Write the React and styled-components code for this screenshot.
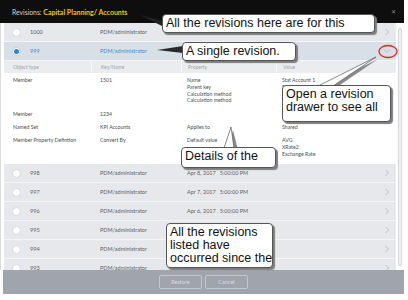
import styled, { createGlobalStyle } from 'styled-components'

const GlobalStyle = createGlobalStyle`
  html, body {
    margin: 0;
    padding: 0;
    background: #fff;
  }
  body {
    font-family: Lato, "Liberation Sans", sans-serif;
  }
`

const topRows = [
  { id: '1000', date: 'Apr 10, 2017' },
  { id: '999', date: 'Apr 9, 2017', selected: true },
]

const bottomRows = [
  { id: '998', date: 'Apr 8, 2017' },
  { id: '997', date: 'Apr 7, 2017' },
  { id: '996', date: 'Apr 6, 2017' },
  { id: '995', date: 'Apr 5, 2017' },
  { id: '994', date: 'Apr 4, 2017' },
  { id: '993', date: 'Apr 3, 2017' },
]

const details = [
  {
    type: 'Member',
    key: '1501',
    props: ['Name', 'Parent key', 'Calculation method', 'Calculation method'],
    values: ['Stat Account 1', 'Stat Accounts', '', 'AVG'],
  },
  { type: 'Member', key: '1234', props: [], values: ['Custom'] },
  { type: 'Named Set', key: 'KPI Accounts', props: ['Applies to'], values: ['Shared'] },
  {
    type: 'Member Property Defintion',
    key: 'Convert By',
    props: ['Default value'],
    values: ['AVG', 'XRate2', 'Exchange Rate'],
  },
]

const Chevron = ({ down }) => (
  <svg width="8" height="8" viewBox="0 0 8 8">
    {down ? (
      <path d="M1 2.5 L4 5.5 L7 2.5" fill="none" stroke="#a9aeb5" strokeWidth="0.8" />
    ) : (
      <path d="M2.5 1 L5.5 4 L2.5 7" fill="none" stroke="#b3b7bd" strokeWidth="0.8" />
    )}
  </svg>
)

const RevisionRow = ({ row }) => (
  <Row $selected={row.selected}>
    <Radio $selected={row.selected} />
    <Cell>{row.id}</Cell>
    <Cell>PDM/administrator</Cell>
    <Cell>
      {row.date}
      <Time>5:00:00 PM</Time>
    </Cell>
    <Arrow>
      <Chevron down={row.selected} />
    </Arrow>
  </Row>
)

const App = () => {
  return (
    <>
      <GlobalStyle />
      <Frame>
        <Header>
          <Title>
            Revisions: <strong>Capital Planning/ Accounts</strong>
          </Title>
          <Close>✕</Close>
        </Header>

        <Content>
          <List>
            {topRows.map((row) => (
              <RevisionRow key={row.id} row={row} />
            ))}

            <DetailHead>
              <HeadCell $pad={9}>Object type</HeadCell>
              <HeadCell $pad={9}>Key/Name</HeadCell>
              <HeadCell $pad={6}>Property</HeadCell>
              <HeadCell $pad={6}>Value</HeadCell>
            </DetailHead>

            <DetailBody>
              {details.map((d, i) => (
                <DetailRow key={i}>
                  <DetailCell $pad={9}>{d.type}</DetailCell>
                  <DetailCell $pad={9}>{d.key}</DetailCell>
                  <DetailCell $pad={6}>
                    {d.props.map((p, j) => (
                      <div key={j}>{p}</div>
                    ))}
                  </DetailCell>
                  <DetailCell $pad={6}>
                    {d.values.map((v, j) => (
                      <div key={j}>{v || '\u00a0'}</div>
                    ))}
                  </DetailCell>
                </DetailRow>
              ))}
            </DetailBody>

            {bottomRows.map((row) => (
              <RevisionRow key={row.id} row={row} />
            ))}
          </List>
          <Scrollbar>
            <Thumb />
          </Scrollbar>
        </Content>

        <Footer>
          <FooterButton>Restore</FooterButton>
          <FooterButton>Cancel</FooterButton>
        </Footer>

        {/* annotation layer */}
        <Pointers width="408" height="300" viewBox="0 0 408 300">
          <polygon points="140,15 164,21 164,27" fill="#222" />
          <polygon points="157,50 183,46 183,53" fill="#2a2a2a" />
          <ellipse cx="388" cy="51.5" rx="9" ry="6" fill="none" stroke="#e0241c" strokeWidth="1.3" />
          <polygon points="378,59 322,87 337,87" fill="#8a8a8a" />
          <polygon points="376,57 318,86 333,86" fill="#fff" stroke="#555" strokeWidth="0.7" />
          <polygon points="233,130 228,150 238,150" fill="#8a8a8a" />
          <polygon points="231,127 224,148 234,148" fill="#fff" stroke="#555" strokeWidth="0.7" />
        </Pointers>

        <Callout $x={162} $y={14} $w={213} $h={19}>
          All the revisions here are for this
        </Callout>
        <Callout $x={182} $y={42} $w={114} $h={19}>
          A single revision.
        </Callout>
        <Callout $x={282} $y={85} $w={109} $h={37}>
          Open a revision
          <br />
          drawer to see all
        </Callout>
        <Callout $x={181} $y={147} $w={95} $h={21}>
          Details of the
        </Callout>
        <Callout $x={166} $y={223} $w={107} $h={45}>
          All the revisions
          <br />
          listed have
          <br />
          occurred since the
        </Callout>
      </Frame>
    </>
  )
}

export default App

const Frame = styled.div`
  position: relative;
  width: 408px;
  height: 300px;
  overflow: hidden;
  background: #fff;
  display: flex;
  flex-direction: column;
`

const Header = styled.div`
  width: 404px;
  height: 23px;
  flex-shrink: 0;
  box-sizing: border-box;
  background: #0e0e0e;
  padding: 0 8px 0 12px;
  display: flex;
  align-items: center;
  justify-content: space-between;
`

const Title = styled.div`
  color: #d6d6d6;
  font-size: 6.8px;

  strong {
    color: #f2c200;
    font-weight: 700;
    font-size: 7px;
  }
`

const Close = styled.div`
  color: #8c8c8c;
  font-size: 6px;
  font-family: "DejaVu Sans", sans-serif;
`

const Content = styled.div`
  width: 404px;
  height: 247px;
  flex-shrink: 0;
  box-sizing: border-box;
  padding-left: 3px;
  border-left: 1px solid #dcdcdc;
  display: flex;
`

const List = styled.div`
  flex: 1;
  overflow: hidden;
`

const Row = styled.div`
  height: 19px;
  box-sizing: border-box;
  border-bottom: 1px solid #f3f4f6;
  background: ${(p) => (p.$selected ? '#d9dfe7' : '#e6e8eb')};
  color: ${(p) => (p.$selected ? '#3f8cc6' : '#5c5f63')};
  padding: 0 4px 0 8px;
  display: grid;
  grid-template-columns: 18px 70px 87px 1fr 10px;
  align-items: center;
  font-size: 5.5px;
`

const Radio = styled.div`
  position: relative;
  width: 9px;
  height: 9px;
  box-sizing: border-box;
  border-radius: 50%;
  border: 1px solid ${(p) => (p.$selected ? '#b9cde0' : '#d6d9dd')};
  background: #fff;

  &::after {
    content: '';
    display: ${(p) => (p.$selected ? 'block' : 'none')};
    position: absolute;
    left: 1px;
    top: 1px;
    width: 5px;
    height: 5px;
    border-radius: 50%;
    background: #2b86c8;
  }
`

const Cell = styled.div`
  white-space: nowrap;
`

const Time = styled.span`
  margin-left: 4px;
`

const Arrow = styled.div`
  display: flex;
  align-items: center;
  justify-content: center;
`

const DetailHead = styled.div`
  height: 12px;
  background: #eaecee;
  display: grid;
  grid-template-columns: 87px 90px 95px 1fr;
  font-size: 5px;
  color: #a0a3a8;
`

const HeadCell = styled.div`
  padding-left: ${(p) => p.$pad}px;
  display: flex;
  align-items: center;
  & + & {
    border-left: 1px solid #f6f7f8;
  }
`

const DetailBody = styled.div`
  background: #fff;
  padding: 4px 0 6.5px;
  display: flex;
  flex-direction: column;
  gap: 6.5px;
  font-size: 5.2px;
  line-height: 6.8px;
  color: #4a4d52;
`

const DetailRow = styled.div`
  display: grid;
  grid-template-columns: 87px 90px 95px 1fr;
`

const DetailCell = styled.div`
  padding-left: ${(p) => p.$pad}px;
  white-space: nowrap;
`

const Scrollbar = styled.div`
  width: 8px;
  flex-shrink: 0;
  background: #fff;
  padding-top: 5px;
`

const Thumb = styled.div`
  width: 4px;
  height: 238px;
  margin-left: 2px;
  box-sizing: border-box;
  border: 1px solid #d3d6da;
  border-radius: 3px;
  background: #eef0f2;
`

const Footer = styled.div`
  width: 401px;
  height: 24px;
  margin-left: 3px;
  flex-shrink: 0;
  background: #9fa4ad;
  display: flex;
  justify-content: center;
  align-items: center;
  gap: 3px;
`

const FooterButton = styled.div`
  width: 43px;
  height: 14px;
  box-sizing: border-box;
  border: 1px solid #c3c7ce;
  border-radius: 2px;
  color: #d9dce1;
  font-size: 5.5px;
  display: flex;
  align-items: center;
  justify-content: center;
`

const Pointers = styled.svg`
  position: absolute;
  left: 0;
  top: 0;
  pointer-events: none;
`

const Callout = styled.div`
  position: absolute;
  left: ${(p) => p.$x}px;
  top: ${(p) => p.$y}px;
  width: ${(p) => p.$w}px;
  height: ${(p) => p.$h}px;
  box-sizing: border-box;
  padding: 2px 3px;
  background: #fff;
  border: 1px solid #555;
  border-radius: 4px;
  box-shadow: 2px 2px 1px #7d7d7d;
  font-family: "Liberation Sans", Arial, sans-serif;
  font-size: 12.5px;
  line-height: 13px;
  color: #111;
  white-space: nowrap;
  overflow: hidden;
`
